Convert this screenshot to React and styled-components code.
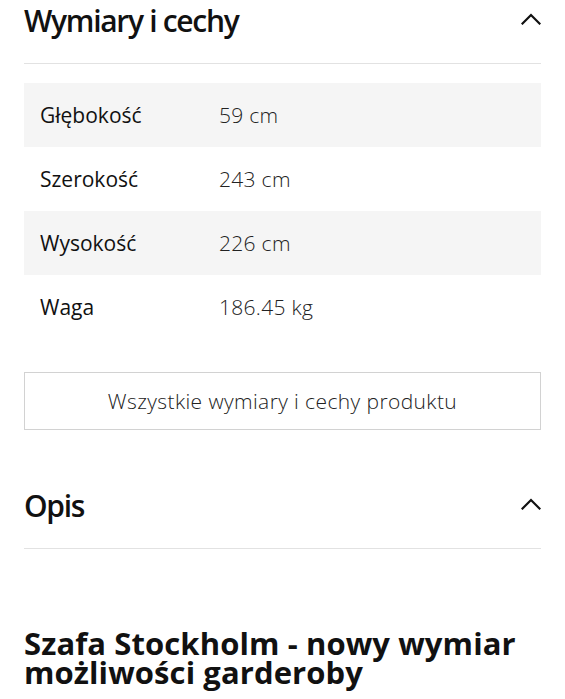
import styled, { createGlobalStyle } from "styled-components";

const specs = [
  { label: "Głębokość", value: "59 cm" },
  { label: "Szerokość", value: "243 cm" },
  { label: "Wysokość", value: "226 cm" },
  { label: "Waga", value: "186.45 kg" },
];

function Chevron() {
  return (
    <svg width="20" height="12" viewBox="0 0 20 12" fill="none">
      <polyline
        points="1.5,10.5 10,2 18.5,10.5"
        stroke="#111"
        strokeWidth="2.2"
        strokeLinecap="square"
      />
    </svg>
  );
}

function SectionHeader({ title }) {
  return (
    <HeaderRow>
      <Title>{title}</Title>
      <Toggle aria-label="Zwiń">
        <Chevron />
      </Toggle>
    </HeaderRow>
  );
}

function App() {
  return (
    <Page>
      <GlobalStyle />
      <SectionHeader title="Wymiary i cechy" />
      <SpecTable>
        {specs.map((item, i) => (
          <SpecRow key={item.label} $shaded={i % 2 === 0}>
            <SpecLabel>{item.label}</SpecLabel>
            <SpecValue>{item.value}</SpecValue>
          </SpecRow>
        ))}
      </SpecTable>
      <OutlineButton>Wszystkie wymiary i cechy produktu</OutlineButton>
      <OpisSection>
        <SectionHeader title="Opis" />
      </OpisSection>
      <DescTitle>Szafa Stockholm - nowy wymiar możliwości garderoby</DescTitle>
    </Page>
  );
}

export default App;

const GlobalStyle = createGlobalStyle`
  body {
    margin: 0;
    background: #fff;
    font-family: "Open Sans", "Noto Sans", sans-serif;
    color: #111;
  }
`;

const Page = styled.div`
  display: flex;
  flex-direction: column;
  padding: 0 24px;
  height: 699px;
  overflow: hidden;
`;

const HeaderRow = styled.div`
  display: flex;
  justify-content: space-between;
  align-items: flex-start;
  padding-bottom: 21px;
  border-bottom: 1px solid #e2e2e2;
`;

const Title = styled.h2`
  margin: 0;
  font-size: 30px;
  line-height: 42px;
  font-weight: 600;
  letter-spacing: -1.3px;
`;

const Toggle = styled.button`
  border: 0;
  background: none;
  padding: 0;
  margin: 13px 0 0;
  width: 20px;
  height: 12px;
  display: flex;
`;

const SpecTable = styled.div`
  display: flex;
  flex-direction: column;
  margin-top: 19px;
`;

const SpecRow = styled.div`
  display: grid;
  grid-template-columns: 179px 1fr;
  align-items: center;
  height: 64px;
  padding-left: 16px;
  background: ${(p) => (p.$shaded ? "#f5f5f5" : "#fff")};
`;

const SpecLabel = styled.span`
  font-size: 21px;
  font-weight: 400;
`;

const SpecValue = styled.span`
  font-size: 21px;
  font-weight: 300;
  letter-spacing: 0.3px;
  color: #222;
`;

const OutlineButton = styled.button`
  margin-top: 33px;
  height: 58px;
  border: 1px solid #d2d2d2;
  background: #fff;
  font-family: inherit;
  font-size: 21px;
  font-weight: 300;
  letter-spacing: 0.4px;
  color: #222;
`;

const OpisSection = styled.div`
  margin-top: 55px;
`;

const DescTitle = styled.h1`
  margin: 80px 0 0;
  font-size: 31px;
  line-height: 29px;
  font-weight: 700;
  letter-spacing: 0.1px;
`;
